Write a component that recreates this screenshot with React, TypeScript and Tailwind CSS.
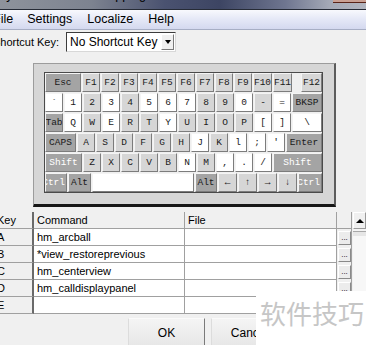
import React from "react";

type Tone = "d" | "l" | "w" | "dw";

interface KeyDef {
  label: string;
  w: string;
  tone: Tone;
  cut?: boolean;
}

const k = (label: string, w: string, tone: Tone, cut?: boolean): KeyDef => ({ label, w, tone, cut });

const ROWS: KeyDef[][] = [
  [
    k("Esc", "w-[36px]", "d"),
    k("F1", "w-[18px]", "l"),
    k("F2", "w-[18px]", "l"),
    k("F3", "w-[18px]", "l"),
    k("F4", "w-[18px]", "l"),
    k("F5", "w-[18px]", "l"),
    k("F6", "w-[18px]", "l"),
    k("F7", "w-[18px]", "l"),
    k("F8", "w-[18px]", "l"),
    k("F9", "w-[18px]", "l"),
    k("F10", "w-[19px]", "l"),
    k("F11", "w-[19px]", "l"),
    k("F12", "w-[21px] ml-auto", "l"),
  ],
  [
    k("`", "w-[18px]", "w"),
    k("1", "w-[18px]", "w"),
    k("2", "w-[18px]", "l"),
    k("3", "w-[18px]", "w"),
    k("4", "w-[18px]", "l"),
    k("5", "w-[18px]", "w"),
    k("6", "w-[18px]", "w"),
    k("7", "w-[18px]", "w"),
    k("8", "w-[18px]", "l"),
    k("9", "w-[18px]", "l"),
    k("0", "w-[18px]", "w"),
    k("-", "w-[18px]", "l"),
    k("=", "w-[18px]", "w"),
    k("BKSP", "flex-1", "d"),
  ],
  [
    k("Tab", "w-[18px]", "d"),
    k("Q", "w-[18px]", "w"),
    k("W", "w-[18px]", "l"),
    k("E", "w-[18px]", "w"),
    k("R", "w-[18px]", "l"),
    k("T", "w-[18px]", "l"),
    k("Y", "w-[18px]", "w"),
    k("U", "w-[18px]", "l"),
    k("I", "w-[18px]", "l"),
    k("O", "w-[18px]", "l"),
    k("P", "w-[18px]", "l"),
    k("[", "w-[18px]", "w"),
    k("]", "w-[18px]", "w"),
    k("\\", "flex-1", "w"),
  ],
  [
    k("CAPS", "w-[31px]", "d"),
    k("A", "w-[18px]", "l"),
    k("S", "w-[18px]", "l"),
    k("D", "w-[18px]", "l"),
    k("F", "w-[18px]", "l"),
    k("G", "w-[18px]", "l"),
    k("H", "w-[18px]", "l"),
    k("J", "w-[18px]", "w"),
    k("K", "w-[18px]", "l"),
    k("l", "w-[18px]", "w"),
    k(";", "w-[18px]", "w"),
    k("'", "w-[18px]", "w"),
    k("Enter", "flex-1", "d"),
  ],
  [
    k("Shift", "w-[37px]", "dw"),
    k("Z", "w-[18px]", "l"),
    k("X", "w-[18px]", "l"),
    k("C", "w-[18px]", "l"),
    k("V", "w-[18px]", "l"),
    k("B", "w-[18px]", "l"),
    k("N", "w-[18px]", "w"),
    k("M", "w-[18px]", "l"),
    k(",", "w-[18px]", "w"),
    k(".", "w-[18px]", "w"),
    k("/", "w-[18px]", "w"),
    k("Shift", "flex-1", "dw"),
  ],
  [
    k("Ctrl", "w-[22px]", "dw", true),
    k("Alt", "w-[23px]", "d"),
    k("", "w-[102px]", "w"),
    k("Alt", "w-[22px]", "d"),
    k("←", "w-[19px]", "l"),
    k("↑", "w-[19px]", "l"),
    k("→", "w-[19px]", "l"),
    k("↓", "w-[19px]", "l"),
    k("Ctrl", "flex-1", "dw", true),
  ],
];

const toneClass: Record<Tone, string> = {
  d: "bg-[#a4a4a4] text-[#1a1a1a]",
  dw: "bg-[#a4a4a4] text-white",
  l: "bg-[#d6d6d6] text-[#1a1a1a]",
  w: "bg-white text-[#1a1a1a]",
};

function Key({ def }: { def: KeyDef }) {
  return (
    <div
      className={`${def.w} ${toneClass[def.tone]} ${def.cut ? "justify-end pr-[1px]" : "justify-center"} h-[19px] flex items-center overflow-hidden whitespace-nowrap border border-t-[#f4f4f4] border-l-[#f4f4f4] border-b-[#7c7c7c] border-r-[#7c7c7c] font-['Liberation_Mono',monospace] text-[9.5px] leading-none`}
    >
      <span className="shrink-0">{def.label}</span>
    </div>
  );
}

const GRID = [
  ["A", "hm_arcball"],
  ["B", "*view_restoreprevious"],
  ["C", "hm_centerview"],
  ["D", "hm_calldisplaypanel"],
  ["E", ""],
];

export default function App() {
  return (
    <div className="relative w-[366px] h-[345px] overflow-hidden bg-[#f0f0f0] font-['Liberation_Sans',Arial,sans-serif] text-black">
      {/* Title bar */}
      <div className="flex h-[9px] overflow-hidden bg-[linear-gradient(90deg,#8e939c_0%,#7d8390_25%,#4a5270_45%,#3d4563_60%,#6f7690_78%,#a4a9b6_90%,#b3b6c0_100%)]">
        <span className="ml-[-9px] mt-[-12px] text-[12.5px] leading-[15px] whitespace-nowrap text-black">
          Keyboard Shortcut Mapping
        </span>
        <div className="ml-auto w-[33px] h-[3px] bg-[#c9a093] border-b border-[#5a2418]" />
      </div>
      <div className="h-[1px] bg-[#262b36]" />

      {/* Menu bar */}
      <div className="flex items-center h-[20px] gap-[15px] bg-[linear-gradient(180deg,#f8f9fd_0%,#e6e9f7_45%,#d4d9ef_100%)] border-b border-[#a7aec4] text-[12.5px]">
        <span className="ml-[-7px]">File</span>
        <span className="ml-[-1px]">Settings</span>
        <span>Localize</span>
        <span>Help</span>
      </div>

      {/* Shortcut key row */}
      <div className="flex items-center h-[20px] mt-[2px]">
        <span className="ml-[-7px] w-[73px] text-[11px] whitespace-nowrap">Shortcut Key:</span>
        <div className="flex items-center w-[110px] h-[20px] bg-white border border-t-[#3c3c3c] border-l-[#3c3c3c] border-b-[#d8d8d8] border-r-[#d8d8d8]">
          <span className="pl-[3px] text-[12px] flex-1 whitespace-nowrap">No Shortcut Key</span>
          <div className="w-[13px] h-[16px] mr-[1px] flex items-center justify-center bg-[#f0f0f0] border border-t-white border-l-white border-b-[#7a7a7a] border-r-[#7a7a7a]">
            <div className="w-0 h-0 border-l-[3.5px] border-r-[3.5px] border-t-[4px] border-l-transparent border-r-transparent border-t-black" />
          </div>
        </div>
      </div>

      {/* Keyboard panel */}
      <div className="ml-[33px] mt-[11px] w-[303px] h-[144px] bg-[#d6d6d6] border-t border-l border-t-[#9c9c9c] border-l-[#9c9c9c] border-r-2 border-r-[#5c5c5c] border-b-[3px] border-b-[#161616]">
        <div className="ml-[10px] mt-[8px] w-[279px] flex flex-col gap-[1px] bg-[#efefef] border border-[#4a4a4a]">
          {ROWS.map((row, i) => (
            <div key={i} className="flex gap-[1px]">
              {row.map((def, j) => (
                <Key key={j} def={def} />
              ))}
            </div>
          ))}
        </div>
      </div>

      {/* Grid */}
      <div className="flex mt-[5px] ml-[-4px]">
        <div className="flex flex-col text-[11px]">
          <div className="flex h-[17px] bg-[#f0f0f0]">
            <div className="w-[38px] pl-[1px] flex items-center border-b border-[#a0a0a0] border-r-2 border-r-[#6a6a6a]">Key</div>
            <div className="w-[151px] pl-[3px] flex items-center border-b border-r border-[#a0a0a0]">Command</div>
            <div className="w-[152px] pl-[3px] flex items-center border-b border-r border-[#a0a0a0]">File</div>
            <div className="w-[15px] border-b border-r border-[#a0a0a0]" />
          </div>
          {GRID.map(([key, cmd], i) => (
            <div key={key} className="flex h-[17px]">
              <div className="w-[38px] pl-[1px] flex items-center bg-[#f0f0f0] border-b border-[#a0a0a0] border-r-2 border-r-[#6a6a6a]">
                {key}
              </div>
              <div className="w-[151px] pl-[3px] flex items-center bg-white border-b border-r border-[#a0a0a0] whitespace-nowrap">
                {cmd}
              </div>
              <div className="w-[152px] bg-white border-b border-r border-[#a0a0a0]" />
              <div className="w-[15px] flex items-end pb-[1px] pl-[1px] bg-[#f0f0f0] border-r border-[#a0a0a0]">
                <div className="w-[13px] h-[14px] flex items-end justify-center bg-[#ececec] border border-t-white border-l-white border-b-[#8a8a8a] border-r-[#8a8a8a] text-[8px] leading-[8px] pb-[2px]">
                  {i < 4 ? "..." : ""}
                </div>
              </div>
            </div>
          ))}
        </div>

        {/* Scrollbar */}
        <div className="ml-[1px] w-[15px] flex flex-col bg-[#f4f4f4]">
          <div className="h-[17px] flex items-center justify-center bg-[#f0f0f0] border border-t-white border-l-white border-b-[#9a9a9a] border-r-[#9a9a9a]">
            <div className="w-0 h-0 border-l-[4px] border-r-[4px] border-b-[4px] border-l-transparent border-r-transparent border-b-black" />
          </div>
          <div className="mt-[2px] h-[5px] bg-[#e6e6e6] border-t border-[#a8a8a8]" />
          <div className="flex-1 bg-[#f7f7f7]" />
        </div>
      </div>

      {/* Buttons */}
      <div className="flex mt-[4px] text-[12px]">
        <div className="ml-[128px] w-[77px] h-[30px] flex items-center justify-center bg-[linear-gradient(180deg,#f4f4f4,#e6e6e6)] border border-t-[#fafafa] border-l-[#dcdcdc] border-r-[#7a7a7a] border-b-[#7a7a7a]">
          OK
        </div>
        <div className="ml-[6px] w-[77px] h-[30px] flex items-center justify-center bg-[linear-gradient(180deg,#f4f4f4,#e6e6e6)] border border-t-[#fafafa] border-l-[#dcdcdc] border-r-[#7a7a7a] border-b-[#7a7a7a]">
          Cancel
        </div>
      </div>

      {/* Watermark */}
      <div className="absolute left-[256px] top-[291px] right-0 bottom-0 bg-white pl-[4px] pt-[9px]">
        <span className="font-['Noto_Sans_CJK_SC',sans-serif] text-[26px] leading-[26px] text-[#c6c6c6] whitespace-nowrap">
          软件技巧
        </span>
      </div>
    </div>
  );
}
